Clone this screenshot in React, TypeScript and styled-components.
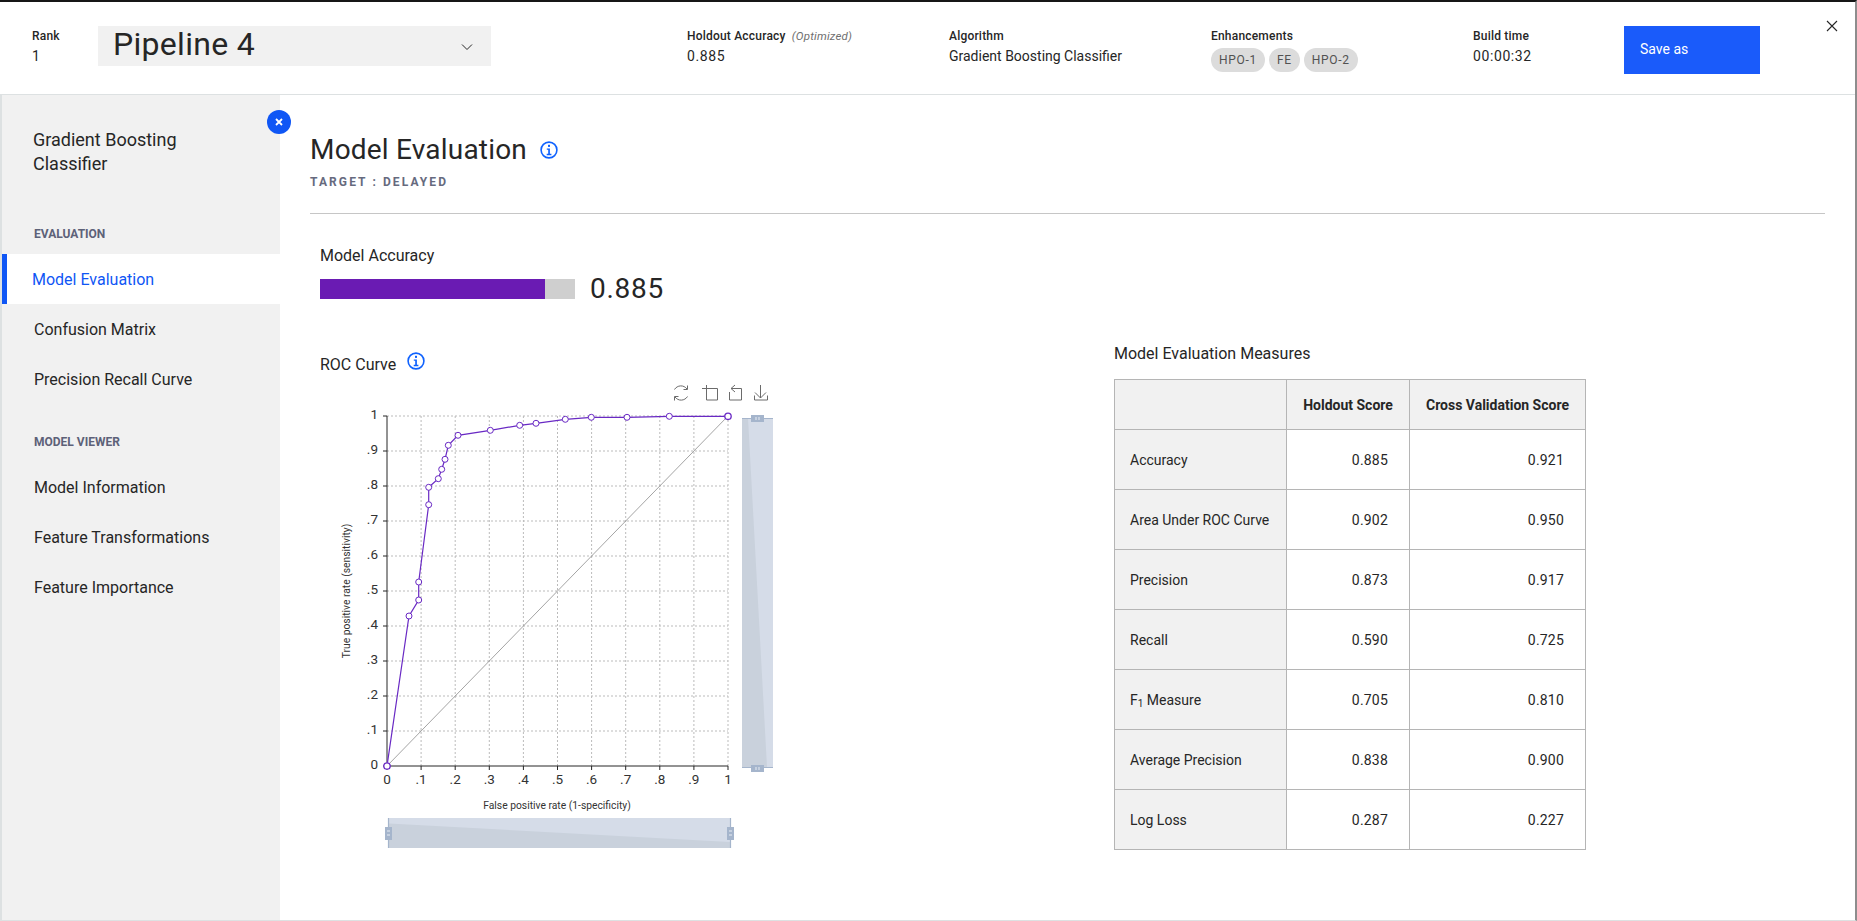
import React from "react";
import styled, { createGlobalStyle } from "styled-components";

const GlobalStyle = createGlobalStyle`
  html, body {
    margin: 0;
    padding: 0;
    background: #fff;
    font-family: Roboto, "Liberation Sans", sans-serif;
    color: #262626;
  }
  * { box-sizing: border-box; }
`;

const ENHANCEMENTS = ["HPO-1", "FE", "HPO-2"];
const NAV_EVALUATION = ["Model Evaluation", "Confusion Matrix", "Precision Recall Curve"];
const NAV_VIEWER = ["Model Information", "Feature Transformations", "Feature Importance"];
const MEASURES: [React.ReactNode, string, string][] = [
  ["Accuracy", "0.885", "0.921"],
  ["Area Under ROC Curve", "0.902", "0.950"],
  ["Precision", "0.873", "0.917"],
  ["Recall", "0.590", "0.725"],
  [<>F<sub>1</sub> Measure</>, "0.705", "0.810"],
  ["Average Precision", "0.838", "0.900"],
  ["Log Loss", "0.287", "0.227"],
];

// roc points in page pixels, chart svg starts at 320,370
const OX = 320;
const OY = 370;
const ROC: [number, number][] = [
  [387, 765], [409, 615], [418.7, 599], [418.7, 581], [428.7, 503.7], [428.7, 486.3], [438.3, 477.7],
  [441.7, 468.3], [445, 458.3], [448.3, 444.3], [458, 434.3], [490.3, 429.3], [519.7, 424.3],
  [536, 422.3], [565.3, 418.3], [591.3, 416.3], [627, 416.3], [669.3, 415.3], [728, 415.3],
];
const PLOT = { l: 387, r: 728, t: 415, b: 765 };
const TICKS = ["0", ".1", ".2", ".3", ".4", ".5", ".6", ".7", ".8", ".9", "1"];

const InfoIcon = ({ size = 18 }: { size?: number }) => (
  <svg width={size} height={size} viewBox="0 0 18 18" fill="none">
    <circle cx="9" cy="9" r="7.900" stroke="#0f62fe" strokeWidth="1.600" />
    <rect x="8" y="3.800" width="2" height="2.100" fill="#0f62fe" />
    <path d="M6.800 7.400h3.100v5.400h1.500v1.400H6.700v-1.400h1.500V8.800H6.800z" fill="#0f62fe" />
  </svg>
);

const RocChart = () => {
  const w = PLOT.r - PLOT.l;
  const h = PLOT.b - PLOT.t;
  return (
    <svg width="470" height="490" viewBox={`${OX} ${OY} 470 490`}>
      {/* toolbox */}
      <g fill="none" stroke="#6b6b6b" strokeWidth="1">
        <path d="M674.500 388.500a7.500 7.500 0 0 1 12.500-0.500M687.500 395.500a7.500 7.500 0 0 1-12.500 0.500" />
        <path d="M687.500 384.500v4h-4M674.500 399.500v-4h4" />
        <path d="M702 387.500h15.500v11.500h-11v-15" />
        <path d="M731 387.500h10.500v11.500h-12v-8M735 384l-4 3.500 4 3.500" />
        <path d="M760.500 384v13M755 391.500l5.500 5.500 5.500-5.500M754.500 394.500v4.500h13v-4.500" />
      </g>
      {/* grid */}
      <g stroke="#bbb" strokeWidth="1" strokeDasharray="2 2">
        {TICKS.map((_, i) => (
          <React.Fragment key={i}>
            {i > 0 && <line x1={PLOT.l + (w * i) / 10} x2={PLOT.l + (w * i) / 10} y1={PLOT.t} y2={PLOT.b} />}
            {i < 10 && <line x1={PLOT.l} x2={PLOT.r} y1={PLOT.t + (h * i) / 10} y2={PLOT.t + (h * i) / 10} />}
          </React.Fragment>
        ))}
      </g>
      <line x1={PLOT.l} y1={PLOT.b} x2={PLOT.r} y2={PLOT.t} stroke="#8d8d8d" strokeWidth="0.800" />
      {/* axes */}
      <path d={`M${PLOT.l} ${PLOT.t}V${PLOT.b}H${PLOT.r}`} fill="none" stroke="#262626" strokeWidth="1" />
      {TICKS.map((t, i) => {
        const x = PLOT.l + (w * i) / 10;
        const y = PLOT.b - (h * i) / 10;
        return (
          <g key={t} fill="#333" fontSize="13.500">
            <line x1={x} x2={x} y1={PLOT.b} y2={PLOT.b + 4} stroke="#262626" />
            <line x1={PLOT.l - 4} x2={PLOT.l} y1={y} y2={y} stroke="#262626" />
            <text x={x} y={PLOT.b + 18} textAnchor="middle">{t}</text>
            <text x={378} y={y + 3} textAnchor="end">{t}</text>
          </g>
        );
      })}
      <text x="557" y="808" textAnchor="middle" fontSize="10.300" fill="#333">False positive rate (1-specificity)</text>
      <text transform="translate(350 590) rotate(-90)" textAnchor="middle" fontSize="10.300" fill="#333">True positive rate (sensitivity)</text>
      {/* curve */}
      <polyline points={ROC.map((p) => p.join(",")).join(" ")} fill="none" stroke="#6929c4" strokeWidth="1.200" />
      {ROC.map((p, i) => (
        <circle
          key={i}
          cx={p[0]}
          cy={p[1]}
          r={i === 0 || i === ROC.length - 1 ? 3.200 : 3}
          fill="#fff"
          stroke="#6929c4"
          strokeWidth={i === 0 || i === ROC.length - 1 ? 1.300 : 1}
        />
      ))}
      {/* right zoom slider */}
      <rect x="742" y="417" width="31" height="350" fill="#d5dce8" />
      <polygon points="742,417 748,417 767,766 742,766" fill="#c9d1dc" />
      <path d="M742 417.500h31M742 766.500h31" stroke="#a5b5cc" strokeWidth="1.200" />
      <rect x="751" y="414" width="13" height="7" fill="#a5b5cc" />
      <rect x="751" y="764" width="13" height="7" fill="#a5b5cc" />
      <path d="M756 416v3M759 416v3M756 766v3M759 766v3" stroke="#e8edf4" />
      {/* bottom zoom slider */}
      <rect x="388" y="817" width="343" height="30" fill="#d5dce8" />
      <polygon points="389,822.500 730,841 730,847 389,847" fill="#c9d1dc" />
      <path d="M388.500 817v30M730.500 817v30" stroke="#a5b5cc" strokeWidth="1.200" />
      <rect x="385" y="826" width="7" height="13" fill="#a5b5cc" />
      <rect x="727" y="826" width="7" height="13" fill="#a5b5cc" />
      <path d="M387 830h3M387 834h3M729 830h3M729 834h3" stroke="#e8edf4" />
    </svg>
  );
};

const App = () => {
  return (
    <Page>
      <GlobalStyle />
      <Header>
        <RankField>
          <FieldLabel>Rank</FieldLabel>
          <FieldValue>1</FieldValue>
        </RankField>
        <PipelineSelect>
          <span>Pipeline 4</span>
          <svg width="12" height="8" viewBox="0 0 12 8" fill="none">
            <path d="M1 1.500l5 5 5-5" stroke="#262626" strokeWidth="1" />
          </svg>
        </PipelineSelect>
        <HeaderField $width={262} $left={196}>
          <FieldLabel>Holdout Accuracy <Optimized>(Optimized)</Optimized></FieldLabel>
          <FieldValue $numeric>0.885</FieldValue>
        </HeaderField>
        <HeaderField $width={262}>
          <FieldLabel>Algorithm</FieldLabel>
          <FieldValue>Gradient Boosting Classifier</FieldValue>
        </HeaderField>
        <HeaderField $width={262}>
          <FieldLabel>Enhancements</FieldLabel>
          <Pills>
            {ENHANCEMENTS.map((e) => <Pill key={e}>{e}</Pill>)}
          </Pills>
        </HeaderField>
        <HeaderField $width={151}>
          <FieldLabel>Build time</FieldLabel>
          <FieldValue $numeric>00:00:32</FieldValue>
        </HeaderField>
        <SaveButton>Save as</SaveButton>
        <CloseButton>
          <svg width="12" height="12" viewBox="0 0 12 12" fill="none">
            <path d="M1 1l10 10M11 1L1 11" stroke="#262626" strokeWidth="1.100" />
          </svg>
        </CloseButton>
      </Header>
      <Body>
        <Sidebar>
          <CollapseBadge>
            <svg width="10" height="10" viewBox="0 0 10 10" fill="none">
              <path d="M2 2l6 6M8 2L2 8" stroke="#fff" strokeWidth="1.800" />
            </svg>
          </CollapseBadge>
          <SideTitle>Gradient Boosting<br />Classifier</SideTitle>
          <SideSection>EVALUATION</SideSection>
          {NAV_EVALUATION.map((n, i) => <NavItem key={n} $active={i === 0}>{n}</NavItem>)}
          <SideSection $second>MODEL VIEWER</SideSection>
          {NAV_VIEWER.map((n) => <NavItem key={n}>{n}</NavItem>)}
        </Sidebar>
        <Main>
          <TitleRow>
            <h1>Model Evaluation</h1>
            <InfoIcon />
          </TitleRow>
          <Target>TARGET : DELAYED</Target>
          <Divider />
          <Section>
            <SectionLabel>Model Accuracy</SectionLabel>
            <AccuracyRow>
              <AccuracyTrack>
                <AccuracyFill style={{ width: `${(225 / 255) * 100}%` }} />
              </AccuracyTrack>
              <AccuracyValue>0.885</AccuracyValue>
            </AccuracyRow>
            <Columns>
              <ChartColumn>
                <ChartTitle>
                  <span>ROC Curve</span>
                  <InfoIcon />
                </ChartTitle>
                <RocChart />
              </ChartColumn>
              <MeasuresColumn>
                <SectionLabel>Model Evaluation Measures</SectionLabel>
                <MeasuresTable>
                  <thead>
                    <tr>
                      <HeadCell $width={172} />
                      <HeadCell $width={123}>Holdout Score</HeadCell>
                      <HeadCell $width={176}>Cross Validation Score</HeadCell>
                    </tr>
                  </thead>
                  <tbody>
                    {MEASURES.map((m, i) => (
                      <tr key={i}>
                        <NameCell>{m[0]}</NameCell>
                        <ValueCell>{m[1]}</ValueCell>
                        <ValueCell>{m[2]}</ValueCell>
                      </tr>
                    ))}
                  </tbody>
                </MeasuresTable>
              </MeasuresColumn>
            </Columns>
          </Section>
        </Main>
      </Body>
    </Page>
  );
};

const Page = styled.div`
  width: 1857px;
  height: 921px;
  overflow: hidden;
  border-top: 2px solid #161616;
  border-right: 2px solid #8d8d8d;
  border-bottom: 1px solid #dde1e2;
  display: flex;
  flex-direction: column;
`;

const Header = styled.div`
  height: 93px;
  flex: none;
  position: relative;
  display: flex;
  align-items: flex-start;
  padding: 24px 0 0 32px;
  border-bottom: 1px solid #dde1e2;
`;

const RankField = styled.div`
  width: 66px;
`;

const FieldLabel = styled.div`
  font-size: 12px;
  line-height: 16px;
  font-weight: 500;
  letter-spacing: 0.2px;
  margin-top: 2px;
  white-space: nowrap;
`;

const FieldValue = styled.div<{ $numeric?: boolean }>`
  font-size: 14px;
  line-height: 18px;
  margin-top: 3px;
  white-space: nowrap;
  letter-spacing: ${(p) => (p.$numeric ? "0.6px" : "0")};
`;

const Optimized = styled.span`
  font-style: italic;
  font-weight: 400;
  font-size: 11.500px;
  color: #6f6f6f;
  margin-left: 3px;
`;

const PipelineSelect = styled.div`
  width: 393px;
  height: 40px;
  background: #f1f1f1;
  display: flex;
  align-items: center;
  justify-content: space-between;
  padding: 0 18px 0 15px;
  font-size: 32px;
  line-height: 40px;
  letter-spacing: 0.3px;
  span { margin-top: -4px; }
  svg { margin-top: 1px; }
`;

const HeaderField = styled.div<{ $width: number; $left?: number }>`
  width: ${(p) => p.$width}px;
  margin-left: ${(p) => p.$left || 0}px;
`;

const Pills = styled.div`
  display: flex;
  gap: 4px;
  margin-top: 4px;
`;

const Pill = styled.span`
  height: 24px;
  padding: 0 8px;
  border-radius: 12px;
  background: #dcdcdc;
  color: #525252;
  font-size: 12px;
  line-height: 24px;
  letter-spacing: 0.7px;
`;

const SaveButton = styled.div`
  width: 136px;
  height: 48px;
  background: #1a5bfa;
  color: #fff;
  font-size: 14px;
  line-height: 18px;
  padding: 14px 16px;
`;

const CloseButton = styled.div`
  position: absolute;
  right: 17px;
  top: 18px;
  line-height: 0;
`;

const Body = styled.div`
  flex: 1;
  display: flex;
  min-height: 0;
`;

const Sidebar = styled.div`
  width: 280px;
  flex: none;
  position: relative;
  background: #f1f1f1;
  border-left: 2px solid #dde1e2;
  padding-top: 33px;
`;

const CollapseBadge = styled.div`
  position: absolute;
  right: -11px;
  top: 15px;
  width: 24px;
  height: 24px;
  border-radius: 50%;
  background: #0f56f5;
  display: flex;
  align-items: center;
  justify-content: center;
`;

const SideTitle = styled.div`
  font-size: 18px;
  line-height: 24px;
  padding-left: 31px;
  margin-bottom: 50px;
`;

const SideSection = styled.div<{ $second?: boolean }>`
  font-size: 12px;
  line-height: 16px;
  font-weight: 700;
  color: #5d6178;
  padding-left: 32px;
  margin-top: ${(p) => (p.$second ? "30px" : "0")};
  margin-bottom: 12px;
`;

const NavItem = styled.div<{ $active?: boolean }>`
  height: 50px;
  display: flex;
  align-items: center;
  font-size: 16px;
  padding-left: ${(p) => (p.$active ? "25px" : "32px")};
  background: ${(p) => (p.$active ? "#fff" : "transparent")};
  color: ${(p) => (p.$active ? "#0f56f5" : "#262626")};
  border-left: ${(p) => (p.$active ? "5px solid #0f56f5" : "none")};
`;

const Main = styled.div`
  flex: 1;
  min-width: 0;
  padding: 38px 30px 0 30px;
`;

const TitleRow = styled.div`
  display: flex;
  align-items: center;
  gap: 13px;
  h1 {
    margin: 0;
    font-size: 28px;
    line-height: 34px;
    font-weight: 400;
    letter-spacing: 0.2px;
  }
`;

const Target = styled.div`
  margin-top: 7px;
  font-size: 12px;
  line-height: 16px;
  font-weight: 700;
  letter-spacing: 2.100px;
  color: #666a7e;
`;

const Divider = styled.div`
  height: 1px;
  background: #c6c6c6;
  margin-top: 23px;
`;

const Section = styled.div`
  padding: 32px 0 0 10px;
`;

const SectionLabel = styled.div`
  font-size: 16px;
  line-height: 20px;
`;

const AccuracyRow = styled.div`
  display: flex;
  align-items: center;
  gap: 15px;
  margin-top: 13px;
`;

const AccuracyTrack = styled.div`
  width: 255px;
  height: 20px;
  background: #cfcfcf;
`;

const AccuracyFill = styled.div`
  height: 100%;
  background: #6a1bb3;
`;

const AccuracyValue = styled.div`
  font-size: 28px;
  line-height: 20px;
  letter-spacing: 0.7px;
`;

const Columns = styled.div`
  display: flex;
  margin-top: 45px;
`;

const ChartColumn = styled.div`
  width: 794px;
  flex: none;
`;

const ChartTitle = styled.div`
  display: flex;
  align-items: flex-start;
  gap: 11px;
  font-size: 16px;
  line-height: 20px;
  height: 16px;
  margin-top: 11px;
  svg { margin-top: -3px; }
`;

const MeasuresColumn = styled.div`
  flex: 1;
`;

const MeasuresTable = styled.table`
  border-collapse: collapse;
  table-layout: fixed;
  width: 471px;
  margin-top: 15px;
  font-size: 14px;
`;

const HeadCell = styled.th<{ $width?: number }>`
  width: ${(p) => p.$width}px;
  height: 50px;
  padding: 0;
  background: #f1f1f1;
  border: 1px solid #b5b5b5;
  font-weight: 700;
  text-align: center;
`;

const NameCell = styled.td`
  height: 60px;
  padding: 0 0 0 15px;
  background: #f1f1f1;
  border: 1px solid #b5b5b5;
  white-space: nowrap;
  sub { font-size: 10px; line-height: 0; vertical-align: -2px; }
`;

const ValueCell = styled.td`
  height: 60px;
  padding: 0 21px 0 0;
  border: 1px solid #b5b5b5;
  text-align: right;
  letter-spacing: 0.2px;
`;

export default App;
